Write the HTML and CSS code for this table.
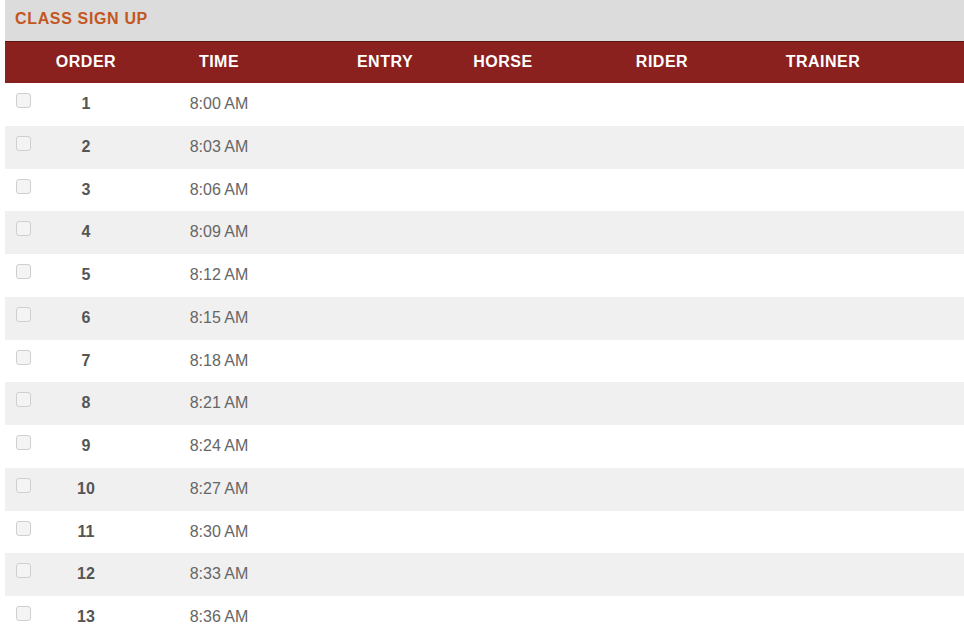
FILE: index.html
```html
<!DOCTYPE html>
<html>
<head>
<meta charset="utf-8">
<link rel="stylesheet" href="styles.css">
</head>
<body>
<div class="panel">
  <div class="panel-title">CLASS SIGN UP</div>
  <div class="head row-grid">
    <div></div>
    <div class="c">ORDER</div>
    <div class="c">TIME</div>
    <div class="c">ENTRY</div>
    <div class="c">HORSE</div>
    <div class="c">RIDER</div>
    <div class="c">TRAINER</div>
    <div></div>
  </div>
  <div class="body">
    <div class="row row-grid"><div class="chk"><input type="checkbox"></div><div class="c num">1</div><div class="c time">8:00 AM</div><div></div><div></div><div></div><div></div><div></div></div>
    <div class="row row-grid"><div class="chk"><input type="checkbox"></div><div class="c num">2</div><div class="c time">8:03 AM</div><div></div><div></div><div></div><div></div><div></div></div>
    <div class="row row-grid"><div class="chk"><input type="checkbox"></div><div class="c num">3</div><div class="c time">8:06 AM</div><div></div><div></div><div></div><div></div><div></div></div>
    <div class="row row-grid"><div class="chk"><input type="checkbox"></div><div class="c num">4</div><div class="c time">8:09 AM</div><div></div><div></div><div></div><div></div><div></div></div>
    <div class="row row-grid"><div class="chk"><input type="checkbox"></div><div class="c num">5</div><div class="c time">8:12 AM</div><div></div><div></div><div></div><div></div><div></div></div>
    <div class="row row-grid"><div class="chk"><input type="checkbox"></div><div class="c num">6</div><div class="c time">8:15 AM</div><div></div><div></div><div></div><div></div><div></div></div>
    <div class="row row-grid"><div class="chk"><input type="checkbox"></div><div class="c num">7</div><div class="c time">8:18 AM</div><div></div><div></div><div></div><div></div><div></div></div>
    <div class="row row-grid"><div class="chk"><input type="checkbox"></div><div class="c num">8</div><div class="c time">8:21 AM</div><div></div><div></div><div></div><div></div><div></div></div>
    <div class="row row-grid"><div class="chk"><input type="checkbox"></div><div class="c num">9</div><div class="c time">8:24 AM</div><div></div><div></div><div></div><div></div><div></div></div>
    <div class="row row-grid"><div class="chk"><input type="checkbox"></div><div class="c num">10</div><div class="c time">8:27 AM</div><div></div><div></div><div></div><div></div><div></div></div>
    <div class="row row-grid"><div class="chk"><input type="checkbox"></div><div class="c num">11</div><div class="c time">8:30 AM</div><div></div><div></div><div></div><div></div><div></div></div>
    <div class="row row-grid"><div class="chk"><input type="checkbox"></div><div class="c num">12</div><div class="c time">8:33 AM</div><div></div><div></div><div></div><div></div><div></div></div>
    <div class="row row-grid"><div class="chk"><input type="checkbox"></div><div class="c num">13</div><div class="c time">8:36 AM</div><div></div><div></div><div></div><div></div><div></div></div>
  </div>
</div>
</body>
</html>
```
FILE: styles.css
```css
html, body {
  margin: 0;
  padding: 0;
  background: #ffffff;
  overflow: hidden;
}
body {
  font-family: "Liberation Sans", Arial, sans-serif;
  font-size: 16px;
  color: #555555;
}
.panel {
  margin-left: 5px;
  width: 970px;
}
.panel-title {
  background: #dcdcdc;
  height: 41px;
  box-sizing: border-box;
  padding: 8px 10px 0;
  line-height: 21px;
  font-size: 16px;
  font-weight: bold;
  letter-spacing: 0.65px;
  color: #c4561f;
}
.row-grid {
  display: grid;
  grid-template-columns: 40px 82px 184px 148px 88px 230px 92px 1fr;
}
.head {
  background: #8a211e;
  border-top: 1px solid #5e1613;
  height: 42px;
  box-sizing: border-box;
  padding-bottom: 2px;
  align-items: center;
  color: #ffffff;
  font-weight: bold;
  letter-spacing: 0.5px;
  line-height: 20px;
}
.c {
  text-align: center;
}
.row {
  height: 42.75px;
  box-sizing: border-box;
  padding-top: 11px;
  line-height: 20px;
  align-items: start;
}
.row:nth-child(even) {
  background: #f0f0f0;
}
.chk {
  padding-left: 11px;
}
.chk input {
  appearance: none;
  -webkit-appearance: none;
  display: block;
  margin: -1px 0 0;
  width: 15px;
  height: 15px;
  box-sizing: border-box;
  border: 1px solid #cfcfcf;
  border-radius: 3px;
  background: #f4f4f4;
}
.num {
  font-weight: bold;
  color: #555555;
}
.time {
  color: #666666;
}
```
